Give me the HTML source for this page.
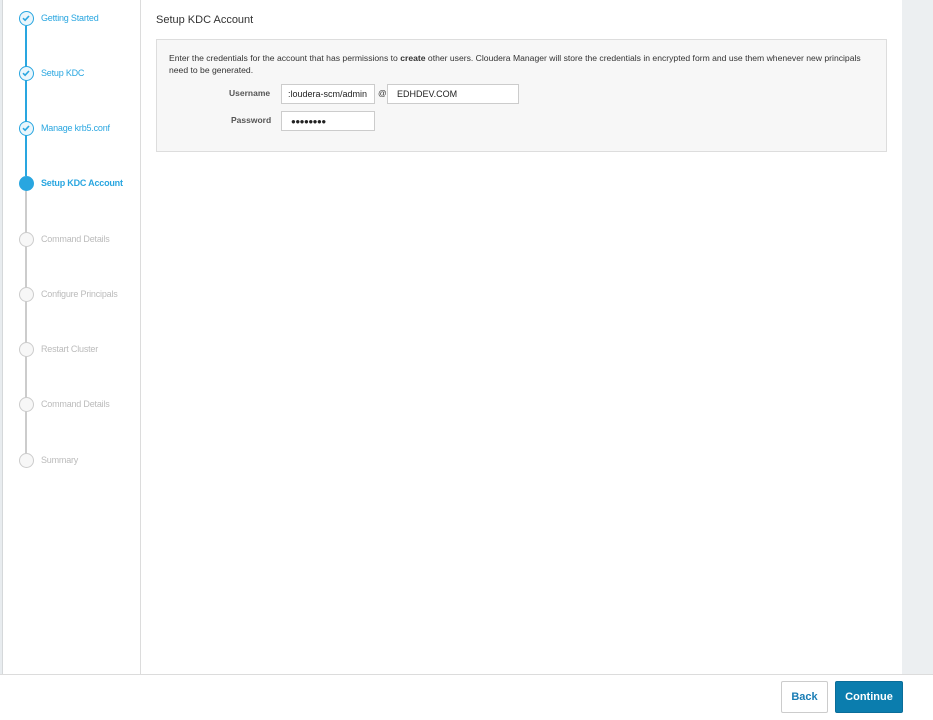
<!DOCTYPE html>
<html><head><meta charset="utf-8"><style>
*{box-sizing:border-box;margin:0;padding:0}
body{width:933px;height:720px;position:relative;background:#fff;font-family:"Liberation Sans",sans-serif;overflow:hidden}
.lstrip{position:absolute;left:0;top:0;width:3px;height:674px;background:#e8ecef;border-right:1px solid #d5d8da}
.rstrip{position:absolute;left:902px;top:0;width:31px;height:674px;background:#eceff1}
.side{position:absolute;left:4px;top:0;width:137px;height:674px;border-right:1px solid #dcdcdc}
.line{position:absolute;left:25px;width:2px}
.step{position:absolute;left:19px;width:15px;height:15px;border-radius:50%}
.done{border:1.5px solid #29a6e0;background:#eaf6fc}
.cur{background:#29a6e0}
.todo{border:1.5px solid #ccc;background:#f7f7f7}
.lab{position:absolute;left:41px;font-size:9px;letter-spacing:-0.2px}
.foot{position:absolute;left:0;top:674px;width:933px;height:46px;border-top:1px solid #dcdcdc;background:#fff}
.btn{position:absolute;top:681px;height:32px;border-radius:2px;font-size:11px;font-weight:bold;display:flex;align-items:center;justify-content:center}
.fld{position:absolute;height:20px;border:1px solid #ccc;background:#fff;font-size:9px;padding-left:6px;display:flex;align-items:center;color:#222}
</style></head><body>
<div class="lstrip"></div>
<div class="rstrip"></div>
<div class="side"></div>
<div class="line" style="top:26px;height:150px;background:#29a6e0"></div>
<div class="line" style="top:190px;height:264px;background:#ccc"></div>

<div class="step done" style="top:11px"><svg width="12" height="12" viewBox="0 0 12 12" style="position:absolute;left:0;top:0"><path d="M3 6.2L5.1 8.2L9 4" stroke="#29a6e0" stroke-width="1.6" fill="none"/></svg></div>
<div class="lab" style="top:13px;color:#29a6e0">Getting Started</div>
<div class="step done" style="top:66px"><svg width="12" height="12" viewBox="0 0 12 12" style="position:absolute;left:0;top:0"><path d="M3 6.2L5.1 8.2L9 4" stroke="#29a6e0" stroke-width="1.6" fill="none"/></svg></div>
<div class="lab" style="top:68px;color:#29a6e0">Setup KDC</div>
<div class="step done" style="top:121px"><svg width="12" height="12" viewBox="0 0 12 12" style="position:absolute;left:0;top:0"><path d="M3 6.2L5.1 8.2L9 4" stroke="#29a6e0" stroke-width="1.6" fill="none"/></svg></div>
<div class="lab" style="top:123px;color:#29a6e0">Manage krb5.conf</div>
<div class="step cur" style="top:176px"></div>
<div class="lab" style="top:178px;color:#29a6e0;font-weight:bold">Setup KDC Account</div>
<div class="step todo" style="top:232px"></div>
<div class="lab" style="top:234px;color:#bbb">Command Details</div>
<div class="step todo" style="top:287px"></div>
<div class="lab" style="top:289px;color:#bbb">Configure Principals</div>
<div class="step todo" style="top:342px"></div>
<div class="lab" style="top:344px;color:#bbb">Restart Cluster</div>
<div class="step todo" style="top:397px"></div>
<div class="lab" style="top:399px;color:#bbb">Command Details</div>
<div class="step todo" style="top:453px"></div>
<div class="lab" style="top:455px;color:#bbb">Summary</div>

<div style="position:absolute;left:156px;top:14px;font-size:11px;color:#333">Setup KDC Account</div>
<div style="position:absolute;left:156px;top:39px;width:731px;height:113px;background:#f7f7f7;border:1px solid #ddd"></div>
<div style="position:absolute;left:169px;top:52px;width:700px;font-size:8.6px;line-height:12px;color:#333">Enter the credentials for the account that has permissions to <b>create</b> other users. Cloudera Manager will store the credentials in encrypted form and use them whenever new principals need to be generated.</div>
<div style="position:absolute;left:229px;top:88px;font-size:8.5px;font-weight:bold;color:#555">Username</div>
<div class="fld" style="left:281px;top:84px;width:94px;padding-left:6px">:loudera-scm/admin</div>
<div style="position:absolute;left:378px;top:88px;font-size:8.5px;color:#333">@</div>
<div class="fld" style="left:387px;top:84px;width:132px;padding-left:9px">EDHDEV.COM</div>
<div style="position:absolute;left:231px;top:115px;font-size:8.5px;font-weight:bold;color:#555">Password</div>
<div class="fld" style="left:281px;top:111px;width:94px;padding-left:9px;font-size:8px;letter-spacing:-0.5px">●●●●●●●●</div>

<div class="foot"></div>
<div class="btn" style="left:781px;width:47px;border:1px solid #ccc;color:#1a7db5;background:#fff">Back</div>
<div class="btn" style="left:835px;width:68px;background:#0b7dae;color:#fff;border:1px solid #0a6d99">Continue</div>
</body></html>
